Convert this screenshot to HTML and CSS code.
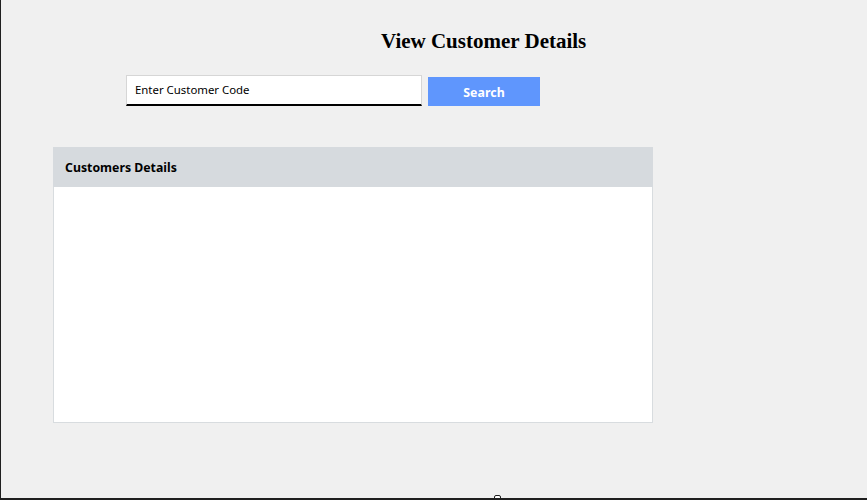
FILE: index.html
```html
<!DOCTYPE html>
<html>
<head>
<meta charset="utf-8">
<link rel="stylesheet" href="styles.css">
</head>
<body>
<div class="frame">
  <h1 class="title">View Customer Details</h1>
  <div class="search-row">
    <div class="input">Enter Customer Code</div>
    <button class="btn">Search</button>
  </div>
  <div class="panel">
    <div class="panel-head">Customers Details</div>
    <div class="panel-body"></div>
  </div>
  <div class="grip"></div>
</div>
</body>
</html>
```
FILE: styles.css
```css
html, body {
  margin: 0;
  padding: 0;
  background: #f0f0f0;
}
.frame {
  position: relative;
  width: 866px;
  height: 498px;
  border-left: 1px solid #1f1f1f;
  border-bottom: 2px solid #1f1f1f;
  background: #f0f0f0;
  font-family: "Noto Sans", "Open Sans", sans-serif;
  overflow: hidden;
}
.title {
  margin: 0;
  padding: 29px 0 0 380px;
  font-family: "Liberation Serif", serif;
  font-weight: bold;
  font-size: 21px;
  line-height: 25px;
  color: #000;
}
.search-row {
  display: flex;
  align-items: flex-end;
  gap: 6px;
  margin: 21px 0 0 125px;
}
.input {
  box-sizing: border-box;
  width: 296px;
  height: 31px;
  background: #fff;
  border: 1px solid #d6d6d6;
  border-bottom: 2px solid #000;
  padding: 6px 0 0 8px;
  font-size: 11.4px;
  color: #000;
}
.btn {
  width: 112px;
  height: 29px;
  border: none;
  background: #5f96fd;
  color: #fff;
  font-family: "Noto Sans", sans-serif;
  font-weight: bold;
  font-size: 12.4px;
  padding: 2px 0 0;
}
.panel {
  box-sizing: border-box;
  width: 600px;
  height: 276px;
  margin: 41px 0 0 52px;
  background: #fff;
  border: 1px solid #d8dcdf;
  border-top: none;
}
.panel-head {
  height: 40px;
  margin: 0 -1px;
  background: #d6dade;
  font-weight: bold;
  font-size: 12.3px;
  line-height: 42px;
  padding-left: 12px;
  color: #000;
}
.grip {
  position: absolute;
  left: 493px;
  bottom: -2px;
  width: 5px;
  height: 3px;
  background: #fff;
  border: 1px solid #1f1f1f;
  border-radius: 2px 2px 0 0;
}
```
